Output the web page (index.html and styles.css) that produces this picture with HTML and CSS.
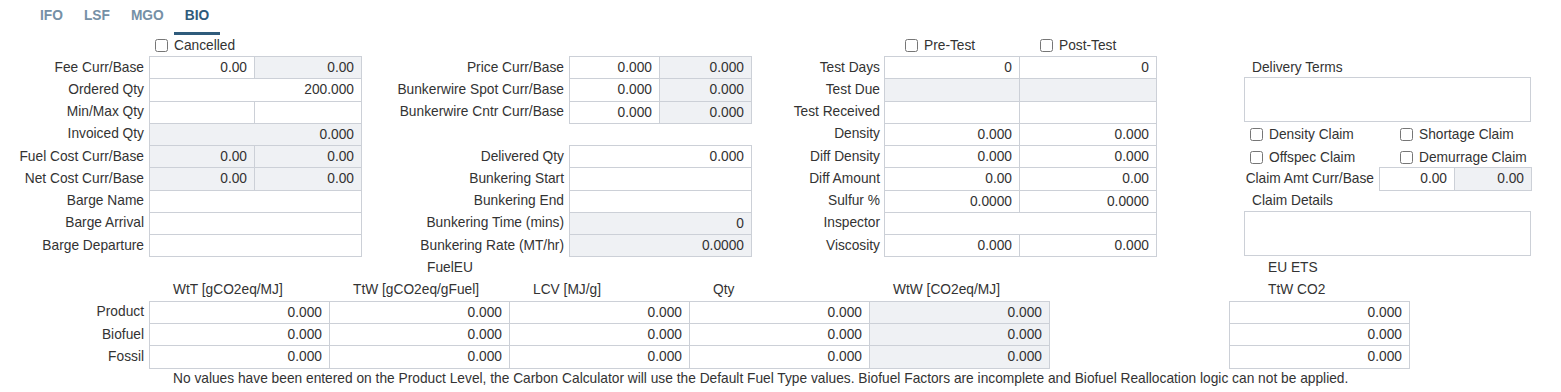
FILE: index.html
```html
<!DOCTYPE html>
<html lang="en">

<head>
    <meta charset="UTF-8">
    <meta name="viewport" content="width=device-width, initial-scale=1.0">
    <title>Bunker Details - BIO</title>
    <link rel="stylesheet" href="styles.css">
</head>

<body>
    <div class="tabs">
        <div class="tab">IFO</div>
        <div class="tab">LSF</div>
        <div class="tab">MGO</div>
        <div class="tab active">BIO</div>
    </div>

    <div class="top">
        <!-- qty / cost -->
        <div class="sec sec1">
            <label class="chk chk-cancel"><input type="checkbox"> Cancelled</label>

            <span class="lbl">Fee Curr/Base</span>
            <input class="fld" value="0.00" readonly>
            <input class="fld ro" value="0.00" readonly>

            <span class="lbl">Ordered Qty</span>
            <input class="fld wide" value="200.000" readonly>

            <span class="lbl">Min/Max Qty</span>
            <input class="fld" value="" readonly>
            <input class="fld" value="" readonly>

            <span class="lbl">Invoiced Qty</span>
            <input class="fld wide ro" value="0.000" readonly>

            <span class="lbl">Fuel Cost Curr/Base</span>
            <input class="fld ro" value="0.00" readonly>
            <input class="fld ro" value="0.00" readonly>

            <span class="lbl">Net Cost Curr/Base</span>
            <input class="fld ro" value="0.00" readonly>
            <input class="fld ro" value="0.00" readonly>

            <span class="lbl">Barge Name</span>
            <input class="fld wide" value="" readonly>

            <span class="lbl">Barge Arrival</span>
            <input class="fld wide" value="" readonly>

            <span class="lbl">Barge Departure</span>
            <input class="fld wide" value="" readonly>
        </div>

        <!-- price / bunkering -->
        <div class="sec sec2">
            <span class="blank-row"></span>

            <span class="lbl">Price Curr/Base</span>
            <input class="fld" value="0.000" readonly>
            <input class="fld ro" value="0.000" readonly>

            <span class="lbl">Bunkerwire Spot Curr/Base</span>
            <input class="fld" value="0.000" readonly>
            <input class="fld ro" value="0.000" readonly>

            <span class="lbl">Bunkerwire Cntr Curr/Base</span>
            <input class="fld" value="0.000" readonly>
            <input class="fld ro" value="0.000" readonly>

            <span class="blank-row"></span>

            <span class="lbl">Delivered Qty</span>
            <input class="fld wide" value="0.000" readonly>

            <span class="lbl">Bunkering Start</span>
            <input class="fld wide" value="" readonly>

            <span class="lbl">Bunkering End</span>
            <input class="fld wide" value="" readonly>

            <span class="lbl">Bunkering Time (mins)</span>
            <input class="fld wide ro" value="0" readonly>

            <span class="lbl">Bunkering Rate (MT/hr)</span>
            <input class="fld wide ro" value="0.0000" readonly>
        </div>

        <!-- testing -->
        <div class="sec sec3">
            <span></span>
            <label class="chk chk-test"><input type="checkbox"> Pre-Test</label>
            <label class="chk chk-test"><input type="checkbox"> Post-Test</label>

            <span class="lbl">Test Days</span>
            <input class="fld" value="0" readonly>
            <input class="fld" value="0" readonly>

            <span class="lbl">Test Due</span>
            <input class="fld ro" value="" readonly>
            <input class="fld ro" value="" readonly>

            <span class="lbl">Test Received</span>
            <input class="fld" value="" readonly>
            <input class="fld" value="" readonly>

            <span class="lbl">Density</span>
            <input class="fld" value="0.000" readonly>
            <input class="fld" value="0.000" readonly>

            <span class="lbl">Diff Density</span>
            <input class="fld" value="0.000" readonly>
            <input class="fld" value="0.000" readonly>

            <span class="lbl">Diff Amount</span>
            <input class="fld" value="0.00" readonly>
            <input class="fld" value="0.00" readonly>

            <span class="lbl">Sulfur %</span>
            <input class="fld" value="0.0000" readonly>
            <input class="fld" value="0.0000" readonly>

            <span class="lbl">Inspector</span>
            <input class="fld wide" value="" readonly>

            <span class="lbl">Viscosity</span>
            <input class="fld" value="0.000" readonly>
            <input class="fld" value="0.000" readonly>
        </div>

        <!-- claims -->
        <div class="sec sec4">
            <span class="blank-row"></span>
            <span class="cap full">Delivery Terms</span>
            <textarea class="memo"></textarea>

            <div class="claims">
                <label class="chk"><input type="checkbox"> Density Claim</label>
                <label class="chk"><input type="checkbox"> Shortage Claim</label>
            </div>
            <div class="claims">
                <label class="chk"><input type="checkbox"> Offspec Claim</label>
                <label class="chk"><input type="checkbox"> Demurrage Claim</label>
            </div>

            <span class="lbl">Claim Amt Curr/Base</span>
            <input class="fld" value="0.00" readonly>
            <input class="fld ro" value="0.00" readonly>

            <span class="cap full">Claim Details</span>
            <textarea class="memo"></textarea>
        </div>
    </div>

    <div class="fuel">
        <span class="fuel-title">FuelEU</span>
        <span class="ets-title">EU ETS</span>

        <span></span>
        <span class="head">WtT [gCO2eq/MJ]</span>
        <span class="head">TtW [gCO2eq/gFuel]</span>
        <span class="head">LCV [MJ/g]</span>
        <span class="head">Qty</span>
        <span class="head">WtW [CO2eq/MJ]</span>
        <span></span>
        <span class="head ets">TtW CO2</span>

        <span class="lbl">Product</span>
        <input class="fld" value="0.000" readonly>
        <input class="fld" value="0.000" readonly>
        <input class="fld" value="0.000" readonly>
        <input class="fld" value="0.000" readonly>
        <input class="fld ro" value="0.000" readonly>
        <span></span>
        <input class="fld" value="0.000" readonly>

        <span class="lbl">Biofuel</span>
        <input class="fld" value="0.000" readonly>
        <input class="fld" value="0.000" readonly>
        <input class="fld" value="0.000" readonly>
        <input class="fld" value="0.000" readonly>
        <input class="fld ro" value="0.000" readonly>
        <span></span>
        <input class="fld" value="0.000" readonly>

        <span class="lbl">Fossil</span>
        <input class="fld" value="0.000" readonly>
        <input class="fld" value="0.000" readonly>
        <input class="fld" value="0.000" readonly>
        <input class="fld" value="0.000" readonly>
        <input class="fld ro" value="0.000" readonly>
        <span></span>
        <input class="fld" value="0.000" readonly>

        <span></span>
        <span class="note">No values have been entered on the Product Level, the Carbon Calculator will use the Default Fuel Type values. Biofuel Factors are incomplete and Biofuel Reallocation logic can not be applied.</span>
    </div>
</body>

</html>
```

FILE: styles.css
```css
body {
    font-family: "Liberation Sans", Arial, sans-serif;
    font-size: 13.75px;
    color: #333;
    margin: 0;
    background: #fff;
}

.tabs {
    display: flex;
    height: 33px;
    padding-left: 29.5px;
    box-sizing: border-box;
}

.tab {
    padding: 3px 10.5px 0;
    line-height: 26px;
    height: 29px;
    font-weight: bold;
    color: #7590a6;
    border-bottom: 3px solid transparent;
}

.tab.active {
    color: #2f5b7b;
    border-bottom-color: #2f5b7b;
}

.top {
    display: flex;
    align-items: flex-start;
}

.sec {
    display: grid;
    grid-template-rows: 23px;
    grid-auto-rows: 22.25px;
    align-items: center;
}

.sec1 {
    grid-template-columns: 149px 105px 107px;
}

.sec2 {
    grid-template-columns: 208px 90px 92px;
}

.sec3 {
    grid-template-columns: 133px 135px 137px;
}

.sec3 .lbl {
    padding-right: 4px;
}

.sec4 {
    margin-left: 88px;
    grid-template-columns: 135px 75px 77px;
}

.lbl {
    text-align: right;
    padding-right: 5px;
    white-space: nowrap;
}

.blank-row,
.full,
.memo,
.claims {
    grid-column: 1 / -1;
}

.fld {
    font: inherit;
    color: #333;
    box-sizing: border-box;
    align-self: start;
    width: calc(100% + 1px);
    height: calc(100% + 1px);
    margin: 0;
    padding: 0 7px 0 6px;
    border: 1px solid #ccd0d7;
    border-radius: 0;
    background: #fff;
    text-align: right;
    outline: none;
}

.fld.ro {
    background: #eff1f4;
}

.fld.wide {
    grid-column: span 2;
}

.fld + .fld {
    position: relative;
    z-index: 1;
}

.chk {
    display: flex;
    align-items: center;
    white-space: nowrap;
}

.chk input {
    width: 13px;
    height: 13px;
    margin: 0 6px 0 0;
}

.chk-cancel {
    grid-column: 2 / span 2;
    padding-left: 6px;
    padding-top: 2px;
}

.chk-test {
    padding-left: 21px;
    padding-top: 2px;
}

.cap {
    padding-left: 8px;
}

.memo {
    grid-row: span 2;
    align-self: start;
    box-sizing: border-box;
    height: 45px;
    margin-top: -1px;
    border: 1px solid #ccd0d7;
    resize: none;
    font: inherit;
}

.claims {
    display: grid;
    grid-template-columns: 150px 137px;
    padding-left: 6px;
    padding-top: 2px;
}

.fuel {
    display: grid;
    grid-template-columns: 149px repeat(7, 180px);
    grid-auto-rows: 22.25px;
    align-items: center;
}

.fuel-title {
    grid-column: 1 / 8;
    padding-left: 427px;
}

.ets-title,
.head.ets {
    padding-left: 39px;
}

.head {
    padding-left: 24px;
    white-space: nowrap;
}

.note {
    grid-column: 2 / -1;
    padding-left: 24px;
    white-space: nowrap;
}
```
